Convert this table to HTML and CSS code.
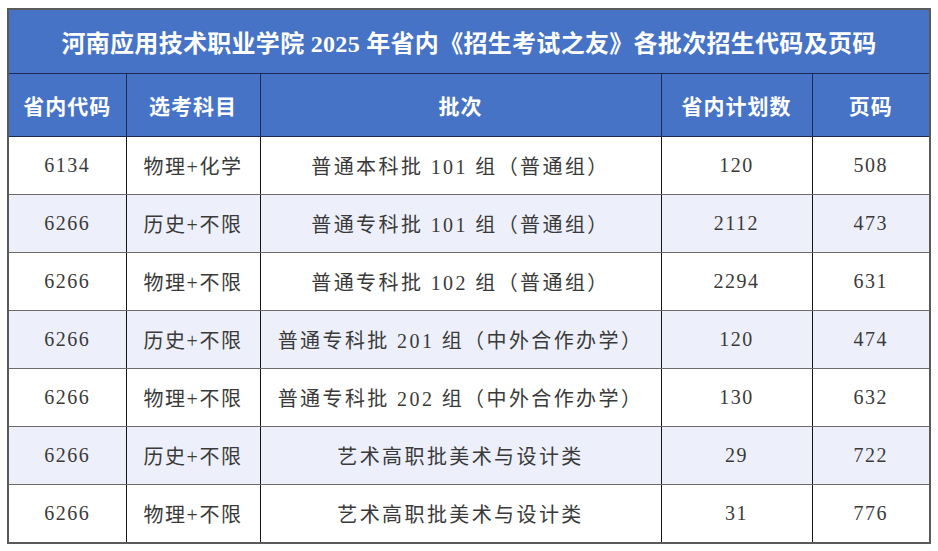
FILE: index.html
```html
<!DOCTYPE html>
<html lang="zh-CN">
<head>
<meta charset="utf-8">
<title>招生代码及页码</title>
<link rel="stylesheet" href="styles.css">
</head>
<body>
<table class="sheet">
  <colgroup>
    <col class="c1"><col class="c2"><col class="c3"><col class="c4"><col class="c5">
  </colgroup>
  <thead>
    <tr class="title-row"><th colspan="5">河南应用技术职业学院 2025 年省内《招生考试之友》各批次招生代码及页码</th></tr>
    <tr class="head-row"><th>省内代码</th><th>选考科目</th><th>批次</th><th>省内计划数</th><th>页码</th></tr>
  </thead>
  <tbody>
    <tr><td>6134</td><td>物理+化学</td><td class="batch">普通本科批 101 组（普通组）</td><td>120</td><td>508</td></tr>
    <tr class="alt"><td>6266</td><td>历史+不限</td><td class="batch">普通专科批 101 组（普通组）</td><td>2112</td><td>473</td></tr>
    <tr><td>6266</td><td>物理+不限</td><td class="batch">普通专科批 102 组（普通组）</td><td>2294</td><td>631</td></tr>
    <tr class="alt"><td>6266</td><td>历史+不限</td><td class="batch">普通专科批 201 组（中外合作办学）</td><td>120</td><td>474</td></tr>
    <tr><td>6266</td><td>物理+不限</td><td class="batch">普通专科批 202 组（中外合作办学）</td><td>130</td><td>632</td></tr>
    <tr class="alt"><td>6266</td><td>历史+不限</td><td class="batch">艺术高职批美术与设计类</td><td>29</td><td>722</td></tr>
    <tr><td>6266</td><td>物理+不限</td><td class="batch">艺术高职批美术与设计类</td><td>31</td><td>776</td></tr>
  </tbody>
</table>
</body>
</html>
```
FILE: styles.css
```css
html, body {
  background: #ffffff;
}
body {
  margin: 8px 0 0 7px;
}
.sheet {
  border-collapse: collapse;
  table-layout: fixed;
  width: 922px;
  border: 2px solid #5a5a5a;
}
.c1 { width: 118px; }
.c2 { width: 134px; }
.c3 { width: 401px; }
.c4 { width: 151px; }
.c5 { width: 118px; }

.sheet th {
  background: #4673c6;
  color: #ffffff;
  font-family: "Liberation Serif", "Noto Sans CJK SC", serif;
  font-weight: 700;
  text-align: center;
  padding: 0;
  border: 1px solid #1c2a55;
}
.title-row th {
  height: 63px;
  font-size: 24px;
  letter-spacing: 0.3px;
}
.head-row th {
  height: 62px;
  font-size: 21px;
  letter-spacing: 1px;
}
.sheet td {
  height: 57px;
  padding: 0;
  text-align: center;
  font-family: "Liberation Serif", "Noto Sans CJK SC", serif;
  font-size: 20px;
  color: #3a3a3a;
  border-left: 1px solid #151515;
  border-right: 1px solid #151515;
  border-top: 1px solid #6b6b6b;
  border-bottom: 1px solid #6b6b6b;
  letter-spacing: 1.5px;
}
.sheet td.batch {
  letter-spacing: 2.4px;
}
.sheet tbody tr.alt td {
  background: #edf0fa;
}
.sheet tbody tr:last-child td {
  border-bottom: 2px solid #5a5a5a;
}
```
